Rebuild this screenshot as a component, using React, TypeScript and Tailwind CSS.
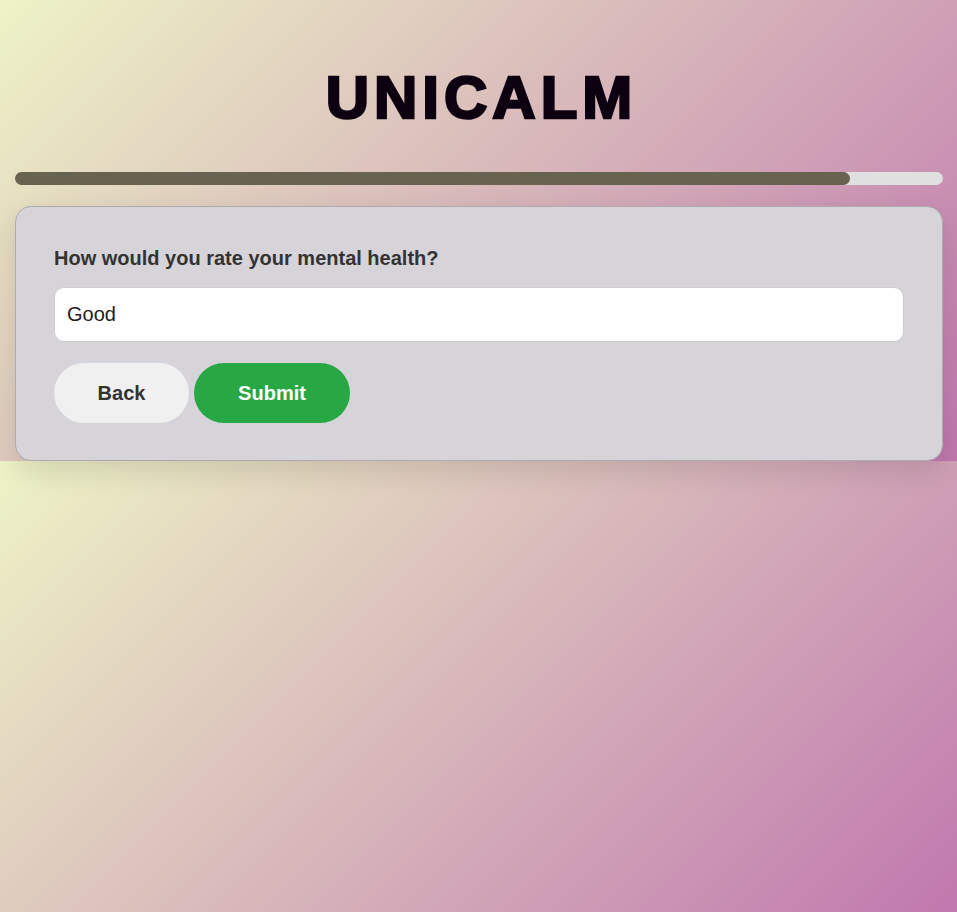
import React, { useState } from 'react';

const App: React.FC = () => {
  const [answer, setAnswer] = useState('Good');
  const progress = 90;

  return (
    <div className="min-h-[912px] w-full bg-[linear-gradient(135deg,#eef3c6,#c077ae)] bg-[length:100%_461px] bg-repeat font-['Liberation_Sans',Arial,sans-serif]">
      <div className="pl-[15px] pr-[14px] pb-[38px]">
        <h1 className="pt-[64px] pl-[5px] text-center text-[60px] font-bold leading-[68px] tracking-[5px] text-[#0d0010] [-webkit-text-stroke:2.5px_#0d0010]">
          UNICALM
        </h1>

        <div className="mt-[40px] h-[13px] w-full rounded-full bg-[#e0e0e0]">
          <div className="h-full rounded-full bg-[#686350]" style={{ width: `${progress}%` }} />
        </div>

        <div className="mt-[21px] rounded-[16px] border border-[#aeaab0] bg-[#d6d4d9] px-[38px] pt-[40px] pb-[37px] shadow-[0_10px_30px_rgba(0,0,0,0.12)]">
          <label htmlFor="answer" className="block text-[20px] font-bold leading-[23px] text-[#333]">
            How would you rate your mental health?
          </label>
          <input
            id="answer"
            type="text"
            value={answer}
            onChange={(e) => setAnswer(e.target.value)}
            className="mt-[17px] block h-[55px] w-full rounded-[10px] border border-[#ccc] bg-white px-[12px] text-[20px] text-[#222] outline-none"
          />
          <div className="mt-[21px] flex gap-[5px]">
            <button type="button" className="h-[60px] w-[135px] rounded-full bg-[#f0f0f0] text-[20px] font-bold text-[#333]">Back</button>
            <button type="button" className="h-[60px] w-[156px] rounded-full bg-[#28a745] text-[20px] font-bold text-white">Submit</button>
          </div>
        </div>
      </div>
    </div>
  );
};

export default App;
